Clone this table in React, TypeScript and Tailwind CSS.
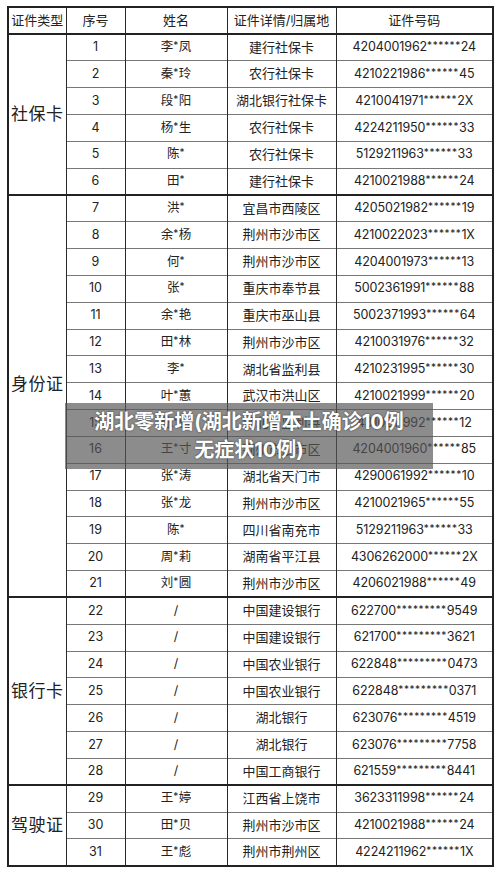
import React from "react";

type Row = [number, string, string, string];

// grouped by card type, label shown once per group via rowSpan
const groups: { label: string; rows: Row[] }[] = [
  {
    label: "社保卡",
    rows: [
      [1, "李*凤", "建行社保卡", "4204001962******24"],
      [2, "秦*玲", "农行社保卡", "4210221986******45"],
      [3, "段*阳", "湖北银行社保卡", "4210041971******2X"],
      [4, "杨*生", "农行社保卡", "4224211950******33"],
      [5, "陈*", "农行社保卡", "5129211963******33"],
      [6, "田*", "建行社保卡", "4210021988******24"],
    ],
  },
  {
    label: "身份证",
    rows: [
      [7, "洪*", "宜昌市西陵区", "4205021982******19"],
      [8, "余*杨", "荆州市沙市区", "4210022023******1X"],
      [9, "何*", "荆州市沙市区", "4204001973******13"],
      [10, "张*", "重庆市奉节县", "5002361991******88"],
      [11, "余*艳", "重庆市巫山县", "5002371993******64"],
      [12, "田*林", "荆州市沙市区", "4210031976******32"],
      [13, "李*", "湖北省监利县", "4210231995******30"],
      [14, "叶*蕙", "武汉市洪山区", "4210021999******20"],
      [15, "陈*俊", "湖北省监利县", "4310211992******12"],
      [16, "王*寸", "荆州市沙市区", "4204001960******85"],
      [17, "张*涛", "湖北省天门市", "4290061992******10"],
      [18, "张*龙", "荆州市沙市区", "4210021965******55"],
      [19, "陈*", "四川省南充市", "5129211963******33"],
      [20, "周*莉", "湖南省平江县", "4306262000******2X"],
      [21, "刘*圆", "荆州市沙市区", "4206021988******49"],
    ],
  },
  {
    label: "银行卡",
    rows: [
      [22, "/", "中国建设银行", "622700*********9549"],
      [23, "/", "中国建设银行", "621700*********3621"],
      [24, "/", "中国农业银行", "622848*********0473"],
      [25, "/", "中国农业银行", "622848*********0371"],
      [26, "/", "湖北银行", "623076*********4519"],
      [27, "/", "湖北银行", "623076*********7758"],
      [28, "/", "中国工商银行", "621559*********8441"],
    ],
  },
  {
    label: "驾驶证",
    rows: [
      [29, "王*婷", "江西省上饶市", "3623311998******24"],
      [30, "田*贝", "荆州市沙市区", "4210021988******24"],
      [31, "王*彪", "荆州市荆州区", "4224211962******1X"],
    ],
  },
];

const font = { fontFamily: '"Inter", "Noto Sans CJK SC", sans-serif' };

const cell = "border-x-[1.5px] border-x-[#2a2a2a] text-center p-0 text-[12.5px] text-[#222]";

// masked chars are drawn small and raised, like in the source sheet
function Masked({ text }: { text: string }) {
  const parts = text.split(/(\*+)/);
  return (
    <>
      {parts.map((p, i) =>
        p.startsWith("*") ? (
          <span key={i} className="text-[10px] align-[2px] tracking-[0.6px]">
            {p}
          </span>
        ) : (
          <span key={i}>{p}</span>
        )
      )}
    </>
  );
}

export default function App() {
  return (
    <div className="relative w-[500px] h-[873px] bg-white pl-[7px] pt-[6px]" style={font}>
      <table className="border-collapse table-fixed w-[485px] border-2 border-[#222]">
        <colgroup>
          <col className="w-[58px]" />
          <col className="w-[59px]" />
          <col className="w-[102px]" />
          <col className="w-[109px]" />
          <col className="w-[157px]" />
        </colgroup>
        <thead>
          <tr className="h-[27px] border-b-2 border-b-[#222]">
            {["证件类型", "序号", "姓名", "证件详情/归属地", "证件号码"].map((h) => (
              <th key={h} className={cell + " font-normal text-[13px]"}>
                {h}
              </th>
            ))}
          </tr>
        </thead>
        {groups.map((g) => (
          <tbody key={g.label} className="border-b-2 border-b-[#222]">
            {g.rows.map((r, i) => (
              <tr key={r[0]} className="h-[26.84px] border-t border-t-[#777]">
                {i === 0 && (
                  <td
                    rowSpan={g.rows.length}
                    className={cell + " text-[17px] tracking-[0.5px]" + (g.label === "身份证" ? " pb-[22px]" : "")}
                  >
                    {g.label}
                  </td>
                )}
                <td className={cell}>{r[0]}</td>
                <td className={cell}>
                  <Masked text={r[1]} />
                </td>
                <td className={cell + " text-[13px]"}>{r[2]}</td>
                <td className={cell + " tracking-[-0.1px]"}>
                  <Masked text={r[3]} />
                </td>
              </tr>
            ))}
          </tbody>
        ))}
      </table>

      {/* news caption strip laid over the table */}
      <div className="absolute left-[65px] top-[403px] w-[368px] h-[66px] bg-[rgba(85,85,85,0.68)] flex flex-col items-center justify-center">
        <p className="text-white font-bold text-[20px] leading-[28px] [text-shadow:0_0_2px_#333]">
          湖北零新增(湖北新增本土确诊10例
        </p>
        <p className="text-white font-bold text-[20px] leading-[28px] [text-shadow:0_0_2px_#333]">
          无症状10例)
        </p>
      </div>
    </div>
  );
}
